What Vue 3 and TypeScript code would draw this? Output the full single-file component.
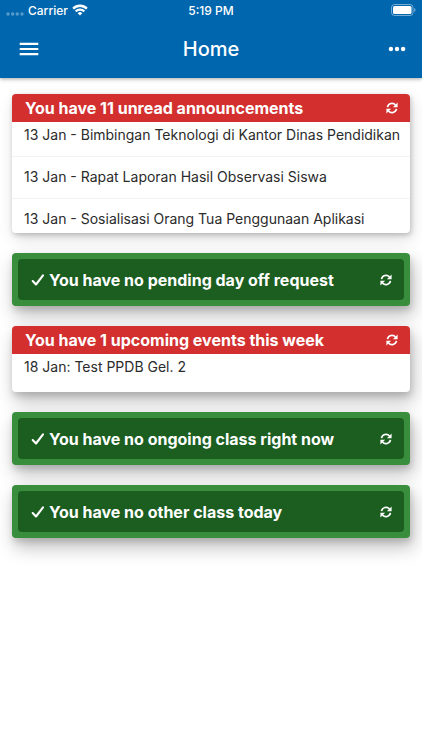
<script setup lang="ts">
import { ref } from 'vue'

interface Panel {
  id: string
  title: string
  done: boolean
  items: string[]
}

const panels = ref<Panel[]>([
  {
    id: 'announcements',
    title: 'You have 11 unread announcements',
    done: false,
    items: [
      '13 Jan - Bimbingan Teknologi di Kantor Dinas Pendidikan',
      '13 Jan - Rapat Laporan Hasil Observasi Siswa',
      '13 Jan - Sosialisasi Orang Tua Penggunaan Aplikasi',
    ],
  },
  { id: 'dayoff', title: 'You have no pending day off request', done: true, items: [] },
  {
    id: 'events',
    title: 'You have 1 upcoming events this week',
    done: false,
    items: ['18 Jan: Test PPDB Gel. 2'],
  },
  { id: 'ongoing', title: 'You have no ongoing class right now', done: true, items: [] },
  { id: 'today', title: 'You have no other class today', done: true, items: [] },
])
</script>

<template>
  <div class="page">
    <header class="top">
      <div class="status">
        <div class="carrier">
          <svg class="signal" width="18" height="4" viewBox="0 0 18 4" aria-hidden="true">
            <circle cx="2" cy="2" r="1.7" /><circle cx="6.7" cy="2" r="1.7" />
            <circle cx="11.3" cy="2" r="1.7" /><circle cx="16" cy="2" r="1.7" />
          </svg>
          <span>Carrier</span>
          <svg width="16" height="12" viewBox="0 0 16 12" aria-hidden="true">
            <g fill="none" stroke="#fff" stroke-width="2.3">
              <path d="M1.1 4.6a9.8 9.8 0 0 1 13.8 0" />
              <path d="M3.7 7.4a6.1 6.1 0 0 1 8.6 0" />
            </g>
            <path d="M8 11.6 5.7 9.2a3.3 3.3 0 0 1 4.6 0z" fill="#fff" />
          </svg>
        </div>
        <span>5:19 PM</span>
        <div class="battery">
          <svg width="25" height="12" viewBox="0 0 25 12" aria-hidden="true">
            <rect x=".5" y=".5" width="21.5" height="11" rx="3" fill="none" stroke="#fff" stroke-opacity=".45" />
            <rect x="2" y="2" width="18.5" height="8" rx="1.6" fill="#fff" />
            <path d="M23.2 4v4a2.2 2.2 0 0 0 0-4z" fill="#fff" fill-opacity=".5" />
          </svg>
        </div>
      </div>
      <nav class="bar">
        <button class="icon-btn menu" type="button" aria-label="Menu">
          <svg width="20" height="14" viewBox="0 0 20 14" fill="#fff" aria-hidden="true">
            <path d="M.7.8h18.6v2.2H.7zM.7 5.9h18.6v2.2H.7zM.7 11h18.6v2.2H.7z" />
          </svg>
        </button>
        <h1>Home</h1>
        <button class="icon-btn more" type="button" aria-label="More">
          <svg width="18" height="6" viewBox="0 0 18 6" fill="#fff" aria-hidden="true">
            <circle cx="2.9" cy="3" r="2.2" /><circle cx="9" cy="3" r="2.2" /><circle cx="15.1" cy="3" r="2.2" />
          </svg>
        </button>
      </nav>
    </header>

    <main class="panels">
      <section v-for="panel in panels" :key="panel.id" class="panel" :class="{ done: panel.done }">
        <div class="head">
          <svg v-if="panel.done" class="check" width="14" height="14" viewBox="0 0 14 14" aria-hidden="true">
            <path d="M1.7 8 5 11.5 12 2.4" fill="none" stroke="#fff" stroke-width="2.1" stroke-linecap="round" stroke-linejoin="round" />
          </svg>
          <h2>{{ panel.title }}</h2>
          <button class="refresh" type="button" aria-label="Refresh">
            <svg width="12" height="12" viewBox="0 0 12 12" aria-hidden="true">
              <g fill="none" stroke="#fff" stroke-width="1.7">
                <path d="M1.5 5.1A4.6 4.6 0 0 1 9.5 3" />
                <path d="M10.5 6.9A4.6 4.6 0 0 1 2.5 9" />
              </g>
              <path d="M11.6.5v4.7H6.9zM.4 11.5V6.8h4.7z" fill="#fff" />
            </svg>
          </button>
        </div>
        <ul v-if="panel.items.length">
          <li v-for="item in panel.items" :key="item">{{ item }}</li>
        </ul>
      </section>
    </main>
  </div>
</template>

<style>
body {
  background: #fff;
}
</style>

<style scoped>
.page {
  min-height: 100vh;
  font-family: Inter, 'Liberation Sans', sans-serif;
  color: #2b2b2b;
}

.top {
  position: relative;
  background: #0066ae;
  color: #fff;
  box-shadow: 0 1px 4px rgba(0, 0, 0, 0.35);
}

.status {
  display: grid;
  grid-template-columns: 1fr auto 1fr;
  align-items: center;
  height: 20px;
  padding: 0 6px;
  font-size: 12px;
  font-weight: 500;
}

.carrier {
  display: flex;
  align-items: center;
  gap: 4px;
}

.signal {
  margin-top: 8px;
  fill: rgba(255, 255, 255, 0.35);
}

.battery {
  display: flex;
  justify-content: flex-end;
}

.bar {
  display: grid;
  grid-template-columns: 1fr auto 1fr;
  align-items: center;
  height: 58px;
  padding: 0 16px;
}

h1,
h2 {
  margin: 0;
}

h1 {
  font-size: 20px;
  font-weight: 500;
  line-height: 24px;
}

button {
  display: flex;
  align-items: center;
  justify-content: center;
  padding: 0;
  border: 0;
  background: none;
  cursor: pointer;
}

.icon-btn {
  height: 34px;
}

.menu {
  width: 26px;
}

.more {
  width: 18px;
  justify-self: end;
}

.panels {
  display: flex;
  flex-direction: column;
  gap: 20px;
  padding: 16px 12px 24px;
}

.panel {
  border-radius: 4px;
  background: #fff;
  box-shadow:
    1px 4px 6px rgba(0, 0, 0, 0.14),
    3px 9px 18px 1px rgba(0, 0, 0, 0.24);
}

.panel:first-child {
  box-shadow:
    1px 2px 5px rgba(0, 0, 0, 0.2),
    2px 6px 16px rgba(0, 0, 0, 0.14);
}

.head {
  display: flex;
  align-items: center;
  height: 28px;
  padding: 0 12px 0 13px;
  border-radius: 4px 4px 0 0;
  background: #d32f2f;
  color: #fff;
}

.done {
  padding: 6px;
  background: #388e3c;
}

.done .head {
  height: 41px;
  border-radius: 4px;
  background: #1b5e20;
}

.check {
  margin-right: 4px;
}

h2 {
  flex: 1;
  font-size: 16px;
  font-weight: 700;
  line-height: 24px;
  white-space: nowrap;
}

ul {
  max-height: 111px;
  margin: 0;
  padding: 1px 0 0;
  overflow: hidden;
  box-sizing: border-box;
  list-style: none;
}

li {
  padding: 8px 0 9px 12px;
  border-bottom: 1px solid #f3f3f3;
  font-size: 14px;
  line-height: 24px;
  white-space: nowrap;
}

li:first-child {
  padding-top: 0;
}

li:last-child {
  border-bottom: 0;
}

li:only-child {
  padding-bottom: 13px;
}
</style>
